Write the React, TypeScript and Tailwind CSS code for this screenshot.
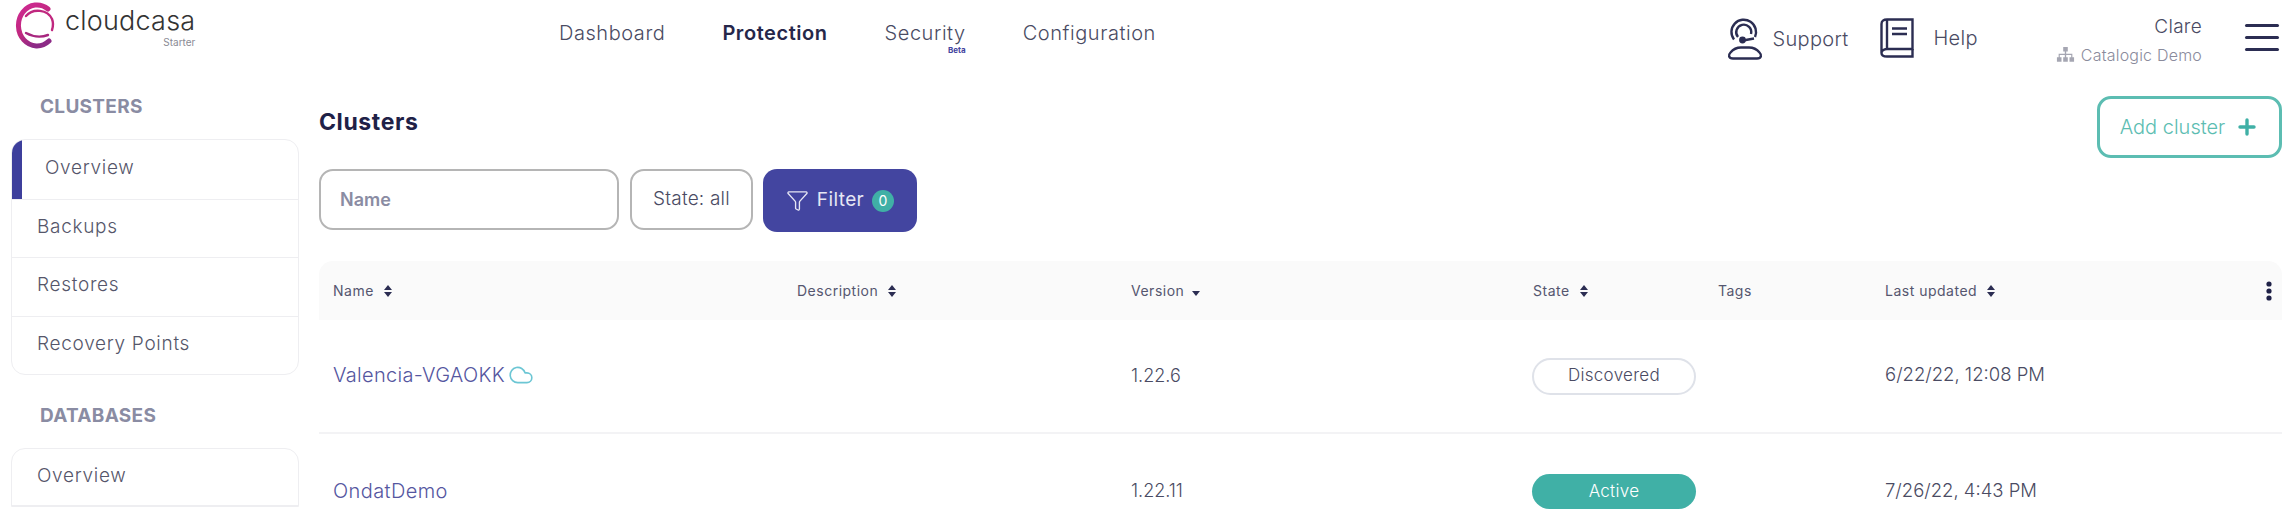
import { Cloud, Funnel, Plus } from 'lucide-react'

const NAV = ['Dashboard', 'Protection', 'Security', 'Configuration']
const CLUSTER_LINKS = ['Overview', 'Backups', 'Restores', 'Recovery Points']

const GRID = 'grid grid-cols-[464px_334px_402px_185px_167px_1fr_26px]'

function Logo() {
  return (
    <svg width="44" height="48" viewBox="0 0 44 48" fill="none" aria-hidden>
      <defs>
        <linearGradient id="ring" x1="0" y1="0" x2="0.5" y2="1">
          <stop offset="0" stopColor="#cf2a93" />
          <stop offset="0.6" stopColor="#c0287f" />
          <stop offset="1" stopColor="#8c2a86" />
        </linearGradient>
      </defs>
      <path d="M33 7 A18.500 20.500 0 1 0 34 39" stroke="url(#ring)" strokeWidth="5" strokeLinecap="round" />
      <path d="M11 14 A15 13 0 0 1 37 17 Q39 22 37 28" stroke="#c0287f" strokeWidth="2.400" strokeLinecap="round" />
      <path d="M11 31 Q22 37 33 33" stroke="#a8277f" strokeWidth="2.400" strokeLinecap="round" />
    </svg>
  )
}

function HeadsetIcon() {
  return (
    <svg width="36" height="42" viewBox="0 0 36 42" fill="none" stroke="#2b2d52" strokeWidth="2.4" aria-hidden>
      <path d="M7 21.500 A12.300 12.300 0 1 1 28 19" />
      <path d="M11 19 A7.500 7.500 0 1 1 24 16" />
      <circle cx="15.500" cy="22" r="2.200" fill="#2b2d52" />
      <path d="M16 22.500 L27 20.500" />
      <path d="M6 40.500 H30 C34.500 40.500 35 37 32.500 34.500 C30 31.500 26 29.500 22 29.500 H14 C10 29.500 6 31.500 3.500 34.500 C1 37 1.500 40.500 6 40.500 Z" />
    </svg>
  )
}

function BookIcon() {
  return (
    <svg width="34" height="40" viewBox="0 0 34 40" fill="none" stroke="#2b2d52" strokeWidth="2.4" aria-hidden>
      <path d="M7 1.500 H32.500 V31 H7 C3.500 31 1.500 33 1.500 35 V6 C1.500 3 3.500 1.500 7 1.500 Z" />
      <path d="M1.500 35 C1.500 37.500 3.500 38.500 7 38.500 H32.500 V31" />
      <path d="M7 1.500 V31" />
      <path d="M12 10.500 H27 M12 16 H27" />
    </svg>
  )
}

function SortIcon() {
  return (
    <svg width="8" height="12" viewBox="0 0 8 12" fill="#2b2d52" className="ml-[10px] shrink-0" aria-hidden>
      <path d="M4 0 L8 5 H0 Z M0 7 H8 L4 12 Z" />
    </svg>
  )
}

function HeadCell({ label, sort = 'both' }: { label: string; sort?: 'both' | 'down' | 'none' }) {
  return (
    <div className="flex items-center text-[14px] tracking-[0.5px] text-[#55566f]">
      {label}
      {sort === 'both' && <SortIcon />}
      {sort === 'down' && (
        <svg width="8" height="5" viewBox="0 0 8 5" fill="#2b2d52" className="ml-2 mt-1.5" aria-hidden>
          <path d="M0 0 H8 L4 5 Z" />
        </svg>
      )}
    </div>
  )
}

function StateBadge({ state }: { state: 'Discovered' | 'Active' }) {
  return state === 'Active' ? (
    <span className="flex h-[35px] w-[164px] items-center justify-center rounded-full bg-[#40b0a6] text-[17px] tracking-[0.3px] text-white">
      Active
    </span>
  ) : (
    <span className="flex h-[37px] w-[164px] items-center justify-center rounded-full border-2 border-[#dfe2e9] text-[17px] tracking-[0.3px] text-[#4a4b63]">
      Discovered
    </span>
  )
}

export default function App() {
  return (
    <div className="h-[513px] w-[2294px] overflow-hidden bg-white font-['Inter',sans-serif] text-[#4a4b63]">
      <header className="relative flex h-[70px] items-start">
        <div className="ml-[15px] mt-[2px] flex w-[488px] shrink-0 items-start gap-[6px]">
          <Logo />
          <div className="relative pt-[3px]">
            <div className="text-[27px] font-light leading-[32px] tracking-[0.2px] text-[#333]">cloudcasa</div>
            <div className="absolute right-0 top-[34px] text-[10px] leading-[12px] text-[#8a8a94]">Starter</div>
          </div>
        </div>

        <nav className="flex pt-[21px] pl-[56px]">
          {NAV.map((item) => (
            <div
              key={item}
              className={
                'relative mr-[57px] text-[20px] leading-[24px] tracking-[0.55px] ' +
                (item === 'Protection' ? 'font-semibold text-[#26274a]' : 'font-light text-[#4a4b63]')
              }
            >
              {item}
              {item === 'Security' && (
                <span className="absolute right-0 top-[24px] text-[8px] font-bold leading-[10px] tracking-normal text-[#43449e]">
                  Beta
                </span>
              )}
            </div>
          ))}
        </nav>

        <div className="ml-auto flex items-start">
          <div className="mt-[18px] flex items-center gap-[10px]">
            <HeadsetIcon />
            <span className="text-[20px] font-light tracking-[0.3px] text-[#4a4b63]">Support</span>
          </div>
          <div className="ml-[31px] mt-[18px] flex items-center gap-[20px]">
            <BookIcon />
            <span className="text-[20px] font-light tracking-[0.3px] text-[#4a4b63]">Help</span>
          </div>
          <div className="ml-[78px] mt-[15px] flex flex-col items-end">
            <span className="text-[19px] font-light leading-[24px] tracking-[0.3px]">Clare</span>
            <span className="mt-[7px] flex items-center gap-[6px] text-[16px] font-light leading-[18px] tracking-[0.2px] text-[#8a8b9c]">
              <svg width="19" height="16" viewBox="0 0 16 14" fill="#a5a6b2" aria-hidden>
                <path d="M6 0 H10 V4 H8.600 V6 H14 V9 H15.500 V13 H11.500 V9 H13 V7 H8.600 V9 H10 V13 H6 V9 H7.400 V7 H3 V9 H4.500 V13 H0.500 V9 H2 V6 H7.400 V4 H6 Z" />
              </svg>
              Catalogic Demo
            </span>
          </div>
          <div className="ml-[43px] mr-[15px] mt-[24px] flex w-[34px] flex-col gap-[9px]">
            <div className="h-[3px] rounded-full bg-[#2b2d52]" />
            <div className="h-[3px] rounded-full bg-[#2b2d52]" />
            <div className="h-[3px] rounded-full bg-[#2b2d52]" />
          </div>
        </div>
      </header>

      <div className="flex">
        <aside className="ml-[11px] w-[288px] shrink-0 pt-[26px]">
          <div className="pl-[29px] text-[19px] font-bold leading-[22px] tracking-[0.3px] text-[#8a8ca3]">CLUSTERS</div>
          <div className="mt-[21px] overflow-hidden rounded-[14px] border border-[#eeeef1]">
            {CLUSTER_LINKS.map((link, i) => (
              <div
                key={link}
                className={
                  'relative flex h-[58.5px] items-center pb-[3px] text-[19px] font-light tracking-[0.7px] text-[#55566a] ' +
                  (i === 0 ? 'pl-[33px]' : 'border-t border-[#eeeef1] pl-[25px]')
                }
              >
                {i === 0 && <span className="absolute inset-y-0 left-0 w-[10px] bg-[#3d3f9c]" />}
                {link}
              </div>
            ))}
          </div>
          <div className="mt-[30px] pl-[29px] text-[19px] font-bold leading-[22px] tracking-[0.3px] text-[#8a8ca3]">DATABASES</div>
          <div className="mt-[21px] rounded-t-[14px] border border-[#eeeef1]">
            <div className="flex h-[56px] items-center pb-[2px] pl-[25px] text-[19px] font-light tracking-[0.7px] text-[#55566a]">Overview</div>
            <div className="h-px bg-[#eeeef1]" />
          </div>
        </aside>

        <main className="ml-[20px] w-[1963px] shrink-0">
          <div className="flex items-start justify-between pt-[26px]">
            <h1 className="mt-[13px] text-[23px] font-bold leading-[26px] tracking-[0.6px] text-[#1f2147]">Clusters</h1>
            <button className="flex h-[62px] w-[185px] items-center justify-center gap-[10px] rounded-[14px] border-[3px] border-[#5cbdb2] text-[20px] font-light text-[#5cbdb2]">
              Add cluster
              <Plus size={24} strokeWidth={3.4} className="text-[#40b0a6]" />
            </button>
          </div>

          <div className="mt-[9px] flex items-center">
            <div className="flex h-[61px] w-[300px] items-center rounded-[14px] border-[2px] border-[#b5b5b5] pl-[19px] text-[18px] font-semibold text-[#8a8ca3]">
              Name
            </div>
            <div className="ml-[11px] flex h-[61px] w-[123px] items-center justify-center rounded-[14px] border-[2px] border-[#b5b5b5] text-[19px] font-light tracking-[0.2px]">
              State: all
            </div>
            <div className="ml-[10px] mt-[2px] flex h-[63px] w-[154px] items-center justify-center gap-[8px] rounded-[14px] bg-[#4345a0] text-[19px] tracking-[0.4px] text-[#e6e6f4]">
              <Funnel size={23} strokeWidth={1.4} />
              Filter
              <span className="flex h-[22px] w-[22px] items-center justify-center rounded-full bg-[#40b0a6] text-[14px] text-white">0</span>
            </div>
          </div>

          <div className={GRID + ' mt-[29px] h-[59px] items-center rounded-t-[14px] bg-[#fafafa] pl-[14px]'}>
            <HeadCell label="Name" />
            <HeadCell label="Description" />
            <HeadCell label="Version" sort="down" />
            <HeadCell label="State" />
            <HeadCell label="Tags" sort="none" />
            <HeadCell label="Last updated" />
            <svg width="6" height="20" viewBox="0 0 6 20" fill="#1f2147" className="justify-self-center" aria-hidden>
              <circle cx="3" cy="3" r="2.600" />
              <circle cx="3" cy="10" r="2.600" />
              <circle cx="3" cy="17" r="2.600" />
            </svg>
          </div>

          <div className={GRID + ' h-[114px] items-center border-b-2 border-[#f3f3f5] pb-[2px] pl-[14px] text-[18px] font-light'}>
            <div className="flex items-center gap-[3px] text-[20px] tracking-[0.3px] text-[#55569f]">
              Valencia-VGAOKK
              <Cloud size={26} strokeWidth={1.5} className="text-[#6cc6d4]" />
            </div>
            <div />
            <div>1.22.6</div>
            <div className="-ml-px mt-[2px]">
              <StateBadge state="Discovered" />
            </div>
            <div />
            <div className="text-[18.5px]">6/22/22, 12:08 PM</div>
          </div>

          <div className={GRID + ' h-[113px] items-center pl-[14px] text-[18px] font-light'}>
            <div className="text-[20px] tracking-[0.4px] text-[#55569f]">OndatDemo</div>
            <div />
            <div>1.22.11</div>
            <div className="-ml-px mt-[2px]">
              <StateBadge state="Active" />
            </div>
            <div />
            <div className="text-[18.5px]">7/26/22, 4:43 PM</div>
          </div>
        </main>
      </div>
    </div>
  )
}
